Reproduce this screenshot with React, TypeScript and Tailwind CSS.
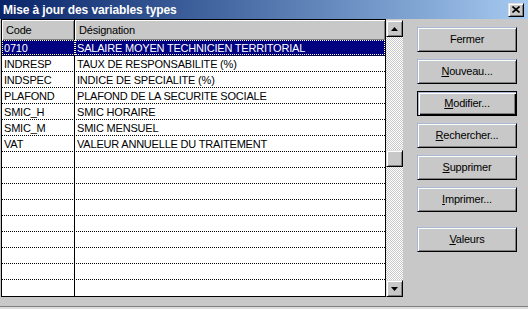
import React from "react";

const rows: [string, string][] = [
  ["0710", "SALAIRE MOYEN TECHNICIEN TERRITORIAL"],
  ["INDRESP", "TAUX DE RESPONSABILITE (%)"],
  ["INDSPEC", "INDICE DE SPECIALITE (%)"],
  ["PLAFOND", "PLAFOND DE LA SECURITE SOCIALE"],
  ["SMIC_H", "SMIC HORAIRE"],
  ["SMIC_M", "SMIC MENSUEL"],
  ["VAT", "VALEUR ANNUELLE DU TRAITEMENT"],
];

function Btn({ children, def }: { children: React.ReactNode; def?: boolean }) {
  return (
    <div
      className={
        def
          ? "w-[100px] h-[25px] border border-black bg-[#c8c8c8] shadow-[inset_1px_1px_0_#a8b8d0,inset_2px_2px_0_#ffffff,inset_-1px_-1px_0_#000000,inset_-2px_-2px_0_#808080] flex items-center justify-center text-[11px] tracking-[-0.2px] text-black"
          : "w-[100px] h-[25px] border border-t-[#a8b8d0] border-l-[#a8b8d0] border-r-black border-b-black bg-[#c8c8c8] shadow-[inset_1px_1px_0_#ffffff,inset_-1px_-1px_0_#808080] flex items-center justify-center text-[11px] tracking-[-0.2px] text-black"
      }
    >
      <span>{children}</span>
    </div>
  );
}

function ScrollBtn({ up }: { up?: boolean }) {
  return (
    <div className="w-[17px] h-[17px] bg-[#c8c8c8] border border-t-[#e0e0e0] border-l-[#e0e0e0] border-r-black border-b-black shadow-[inset_1px_1px_0_#ffffff,inset_-1px_-1px_0_#808080] flex items-center justify-center">
      <svg width="7" height="4" viewBox="0 0 7 4">
        {up ? <path d="M3.5 0 L7 4 L0 4 Z" fill="#000" /> : <path d="M0 0 L7 0 L3.5 4 Z" fill="#000" />}
      </svg>
    </div>
  );
}

export default function App() {
  const all: [string, string][] = [...rows];
  while (all.length < 16) all.push(["", ""]);
  return (
    <div className="w-[528px] h-[309px] bg-[#c8c8c8] flex flex-col overflow-hidden font-['Liberation_Sans',Arial,sans-serif] shadow-[inset_0_-2px_0_#dcdcdc,inset_0_-3px_0_#808080]">
      <div className="h-[19px] flex items-center bg-gradient-to-r from-[#0a246a] to-[#a6caf0] pl-[3px] pr-[4px] shrink-0">
        <span className="flex-1 text-white font-bold text-[12px] tracking-[-0.1px] whitespace-nowrap">
          Mise à jour des variables types
        </span>
        <div className="w-[16px] h-[14px] bg-[#c8c8c8] border border-t-[#e0e0e0] border-l-[#e0e0e0] border-r-black border-b-black shadow-[inset_1px_1px_0_#ffffff,inset_-1px_-1px_0_#808080] flex items-center justify-center">
          <svg width="8" height="7" viewBox="0 0 8 7">
            <path d="M0.5 0.5 L7.5 6.5 M7.5 0.5 L0.5 6.5" stroke="#000" strokeWidth="1.6" />
          </svg>
        </div>
      </div>
      <div className="flex items-start">
        <div className="ml-px flex items-start">
          <div className="w-[385px] h-[278px] border border-black bg-white flex flex-col">
            <div className="flex h-[20px] shrink-0 bg-[#c8c8c8] text-[11px] tracking-[-0.2px] text-black">
              <div className="w-[73px] border-r border-black">
                <div className="h-full pl-[4px] pt-[2px] leading-[16px] shadow-[inset_1px_1px_0_#ffffff,inset_-1px_-1px_0_#808080]">Code</div>
              </div>
              <div className="flex-1 pl-[4px] pt-[2px] leading-[16px] shadow-[inset_1px_1px_0_#ffffff,inset_-1px_-1px_0_#808080]">
                Désignation
              </div>
            </div>
            {all.map(([c, d], i) => {
              const sel = i === 0;
              const last = i === all.length - 1;
              return (
                <div
                  key={i}
                  className={
                    "flex h-[16px] shrink-0 text-[11px] tracking-[-0.2px] leading-[16px] whitespace-nowrap " +
                    (last ? "" : "border-b border-dotted border-black ") +
                    (sel ? "bg-[#000080] text-white" : "text-black")
                  }
                >
                  <div className={"w-[73px] border-r border-black pl-[2px] " + (sel ? "outline-1 outline-dotted outline-[#ffff99] -outline-offset-1" : "")}>
                    {c}
                  </div>
                  <div className={"flex-1 pl-[2px] " + (sel ? "outline-1 outline-dotted outline-[#ffffff] -outline-offset-1" : "")}>
                    {d}
                  </div>
                </div>
              );
            })}
          </div>
          <div className="mt-px w-[17px] h-[277px] flex flex-col">
            <ScrollBtn up />
            <div className="flex-1 flex flex-col bg-[repeating-conic-gradient(#c8c8c8_0%_25%,#ffffff_0%_50%)] bg-size-[2px_2px]">
              <div className="h-[113px]" />
              <div className="w-[17px] h-[17px] bg-[#c8c8c8] border border-t-[#e0e0e0] border-l-[#e0e0e0] border-r-black border-b-black shadow-[inset_1px_1px_0_#ffffff,inset_-1px_-1px_0_#808080]" />
            </div>
            <ScrollBtn />
          </div>
        </div>
        <div className="ml-[14px] mt-[8px] flex flex-col gap-[7px]">
          <Btn>Fermer</Btn>
          <Btn>
            <u>N</u>ouveau...
          </Btn>
          <Btn def>
            <u>M</u>odifier...
          </Btn>
          <Btn>
            <u>R</u>echercher...
          </Btn>
          <Btn>
            <u>S</u>upprimer
          </Btn>
          <Btn>
            <u>I</u>mprimer...
          </Btn>
          <div className="mt-[8px]">
            <Btn>
              <u>V</u>aleurs
            </Btn>
          </div>
        </div>
      </div>
    </div>
  );
}
